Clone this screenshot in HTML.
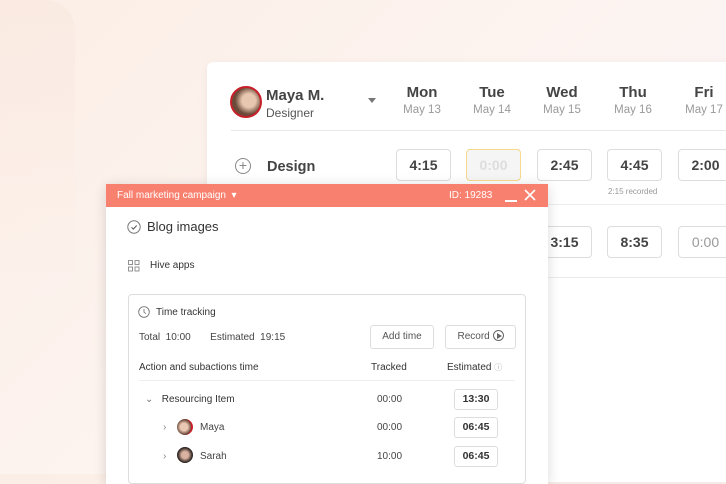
<!DOCTYPE html>
<html><head><style>
*{margin:0;padding:0;box-sizing:border-box}
body{width:726px;height:474px;overflow:hidden;font-family:"Liberation Sans",sans-serif;color:#333;position:relative;
background:linear-gradient(135deg,#fbeee6 0%,#fdf3ee 40%,#fbf5f8 100%)}
.abs{position:absolute}
.card{left:207px;top:62px;width:530px;height:420px;background:#fff;border-radius:6px;box-shadow:0 2px 10px rgba(0,0,0,.06)}
.day{position:absolute;text-align:center;width:70px}
.day b{display:block;font-size:15px;font-weight:bold;color:#444}
.day span{display:block;font-size:11.5px;color:#999;margin-top:3px}
.tb{position:absolute;width:55px;height:32px;border:1px solid #ddd;border-radius:4px;text-align:center;line-height:30px;font-size:14px;font-weight:bold;color:#444;background:#fff}
.pop{left:106px;top:184px;width:442px;height:300px;background:#fff;box-shadow:0 2px 12px rgba(0,0,0,.15)}
.ph{height:23px;background:#f8806f;color:#fff;font-size:10px;position:relative}
.sm{font-size:10px;color:#444}
.eb{position:absolute;width:44px;height:21px;border:1px solid #ddd;border-radius:3px;text-align:center;line-height:19px;font-size:10.5px;font-weight:bold;color:#333}
.btn{position:absolute;height:24px;border:1px solid #ddd;border-radius:3px;font-size:10px;color:#555;text-align:center;line-height:22px}
</style></head><body>
<div class="abs" style="left:0;top:0;width:75px;height:300px;background:linear-gradient(180deg,#f9e6dc,#fcf1ec);border-radius:0 30px 40px 0;opacity:.45"></div>
<div class="abs card">
  <div class="abs" style="left:23px;top:24px;width:32px;height:32px;border-radius:50%;background:radial-gradient(circle at 60% 45%,#e8c7b0 30%,#6b4a3a 60%);border:2px solid #c8202a"></div>
  <div class="abs" style="left:59px;top:25px;font-size:15px;font-weight:bold;color:#444">Maya M.</div>
  <div class="abs" style="left:59px;top:44px;font-size:12px;color:#555">Designer</div>
  <div class="abs" style="left:161px;top:36px;width:0;height:0;border-left:4px solid transparent;border-right:4px solid transparent;border-top:5px solid #777"></div>
  <div class="day" style="left:180px;top:22px"><b>Mon</b><span>May 13</span></div>
  <div class="day" style="left:250px;top:22px"><b>Tue</b><span>May 14</span></div>
  <div class="day" style="left:320px;top:22px"><b>Wed</b><span>May 15</span></div>
  <div class="day" style="left:391px;top:22px"><b>Thu</b><span>May 16</span></div>
  <div class="day" style="left:462px;top:22px"><b>Fri</b><span>May 17</span></div>
  <div class="abs" style="left:24px;top:68px;width:520px;height:1px;background:#e8e8e8"></div>
  <div class="abs" style="left:28px;top:96px;width:16px;height:16px;border:1px solid #888;border-radius:50%;text-align:center;line-height:13px;font-size:14px;color:#888">+</div>
  <div class="abs" style="left:60px;top:97px;font-size:14.5px;font-weight:bold;color:#444">Design</div>
  <div class="tb" style="left:189px;top:87px">4:15</div>
  <div class="tb" style="left:259px;top:87px;border-color:#f6d98a;background:#f5f5f5;color:#ddd">0:00</div>
  <div class="tb" style="left:330px;top:87px">2:45</div>
  <div class="tb" style="left:400px;top:87px">4:45</div>
  <div class="tb" style="left:471px;top:87px">2:00</div>
  <div class="abs" style="left:401px;top:125px;font-size:8px;color:#999">2:15 recorded</div>
  <div class="abs" style="left:0;top:142px;width:530px;height:1px;background:#ececec"></div>
  <div class="tb" style="left:330px;top:164px">3:15</div>
  <div class="tb" style="left:400px;top:164px">8:35</div>
  <div class="tb" style="left:471px;top:164px;color:#999;font-weight:normal">0:00</div>
  <div class="abs" style="left:0;top:215px;width:530px;height:1px;background:#ececec"></div>
</div>
<div class="abs pop">
  <div class="ph"><span class="abs" style="left:11px;top:6px">Fall marketing campaign &nbsp;▾</span>
    <span class="abs" style="left:343px;top:6px">ID: 19283</span>
    <div class="abs" style="left:399px;top:16px;width:12px;height:1.5px;background:#fff"></div>
    <svg class="abs" style="left:418px;top:5px" width="12" height="12"><path d="M1 1L11 11M11 1L1 11" stroke="#fff" stroke-width="1.6"/></svg>
  </div>
  <svg class="abs" style="left:21px;top:36px" width="14" height="14"><circle cx="7" cy="7" r="6.2" fill="none" stroke="#777" stroke-width="1"/><path d="M4.5 7.3l1.8 1.8 3.4-3.6" fill="none" stroke="#555" stroke-width="1"/></svg>
  <div class="abs" style="left:41px;top:35px;font-size:13px;color:#333">Blog images</div>
  <svg class="abs" style="left:22px;top:76px" width="12" height="12" fill="none" stroke="#888" stroke-width="0.9"><rect x=".5" y=".5" width="4" height="4"/><rect x="7" y=".5" width="4" height="4"/><rect x=".5" y="7" width="4" height="4"/><rect x="7" y="7" width="4" height="4"/></svg>
  <div class="abs sm" style="left:44px;top:76px;color:#333">Hive apps</div>
  <div class="abs" style="left:22px;top:110px;width:398px;height:190px;border:1px solid #ddd;border-radius:4px">
    <svg class="abs" style="left:9px;top:11px" width="12" height="12" fill="none" stroke="#777" stroke-width="0.9"><circle cx="6" cy="6" r="5.3"/><path d="M6 3v3.2l2 1.5"/></svg>
    <div class="abs sm" style="left:27px;top:12px;color:#333">Time tracking</div>
    <div class="abs sm" style="left:10px;top:37px">Total&nbsp; 10:00 &nbsp;&nbsp;&nbsp;&nbsp;&nbsp; Estimated&nbsp; 19:15</div>
    <div class="btn" style="left:241px;top:30px;width:64px">Add time</div>
    <div class="btn" style="left:316px;top:30px;width:71px">Record <span style="display:inline-block;width:11px;height:11px;border:1px solid #666;border-radius:50%;vertical-align:-2px;position:relative"><span style="position:absolute;left:3px;top:2px;border-left:5px solid #666;border-top:3px solid transparent;border-bottom:3px solid transparent"></span></span></div>
    <div class="abs sm" style="left:10px;top:67px;color:#333">Action and subactions time</div>
    <div class="abs sm" style="left:242px;top:67px;color:#333">Tracked</div>
    <div class="abs sm" style="left:318px;top:67px;color:#333">Estimated <span style="color:#aaa;font-size:8px">ⓘ</span></div>
    <div class="abs" style="left:10px;top:85px;width:376px;height:1px;background:#eee"></div>
    <div class="abs sm" style="left:16px;top:99px;color:#333"><span style="color:#777">⌄</span>&nbsp;&nbsp; Resourcing Item</div>
    <div class="abs sm" style="left:248px;top:99px">00:00</div>
    <div class="eb" style="left:325px;top:94px">13:30</div>
    <div class="abs sm" style="left:34px;top:127px;color:#888">›</div>
    <div class="abs" style="left:48px;top:124px;width:16px;height:16px;border-radius:50%;background:radial-gradient(circle,#e9c8b4 35%,#6a4536 70%);border-right:2px solid #c8202a"></div>
    <div class="abs sm" style="left:71px;top:127px">Maya</div>
    <div class="abs sm" style="left:248px;top:127px">00:00</div>
    <div class="eb" style="left:325px;top:122px">06:45</div>
    <div class="abs sm" style="left:34px;top:156px;color:#888">›</div>
    <div class="abs" style="left:48px;top:152px;width:16px;height:16px;border-radius:50%;background:radial-gradient(circle,#d9b3a0 30%,#2e2420 65%)"></div>
    <div class="abs sm" style="left:71px;top:156px">Sarah</div>
    <div class="abs sm" style="left:248px;top:156px">10:00</div>
    <div class="eb" style="left:325px;top:151px">06:45</div>
  </div>
</div>
</body></html>
